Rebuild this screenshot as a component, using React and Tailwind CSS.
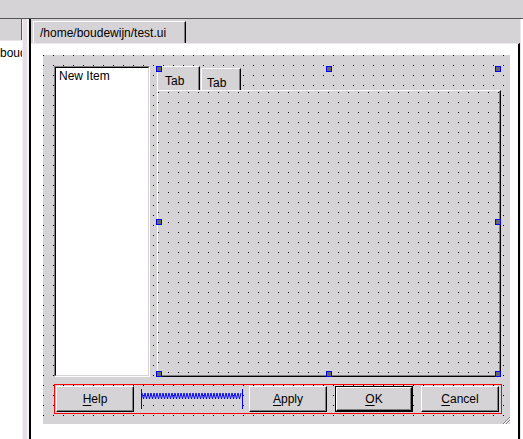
import React from 'react';

function Handle({ className }) {
  return <div className={`absolute h-[6px] w-[6px] border border-[#0000ff] bg-[#666] ${className}`} />;
}

function Button({ children, isDefault = false }) {
  const face = (
    <div className="flex h-full w-full items-center justify-center border-t border-l border-t-white border-l-white border-b border-r border-b-black border-r-black bg-[#d6d3d6] shadow-[inset_-1px_-1px_0_#808080]">
      {children}
    </div>
  );
  if (isDefault) {
    return <div className="h-[26px] w-[78px] shrink-0 border border-black">{face}</div>;
  }
  return <div className="h-[26px] w-[78px] shrink-0">{face}</div>;
}

function Spacer() {
  const pts = [];
  for (let i = 0; i <= 66; i++) pts.push(`${1 + i * 1.5},${i % 2 ? 10 : 4}`);
  return (
    <svg width="102" height="20" className="shrink-0" viewBox="0 0 102 20">
      <line x1="0.5" y1="0" x2="0.5" y2="20" stroke="#0000ff" />
      <line x1="101.5" y1="0" x2="101.5" y2="20" stroke="#0000ff" />
      <polyline points={pts.join(' ')} fill="none" stroke="#0000ff" strokeWidth="1" />
    </svg>
  );
}

export default function App() {
  return (
    <div className="h-[439px] w-[523px] overflow-hidden bg-[#d6d3d6] font-['Liberation_Sans',Arial,sans-serif] text-[12px] leading-none text-black">
      <div className="h-[18px]" />
      <div className="h-px bg-[#555]" />
      <div className="flex h-[420px]">
        {/* left dock */}
        <div className="flex w-[22px] flex-col">
          <div className="h-[21px] border-r border-[#555]" />
          <div className="flex-1 overflow-hidden whitespace-nowrap border-t border-[#ece6ec] bg-white pt-[6px]">
            boudewijn
          </div>
        </div>
        <div className="w-[7px] border-l border-[#f4f0f4] bg-[#e6e0e6] shadow-[inset_-2px_0_0_#f6f2f6]" />
        <div className="w-[2px] bg-black" />

        {/* main tab */}
        <div className="flex w-[489px] flex-col">
          <div className="h-[24px] pl-[2px] pt-[2px]">
            <div className="flex h-[22px] w-[153px] items-center border-t border-l border-t-white border-l-white border-r border-r-black pl-[6px] shadow-[inset_-1px_0_0_#808080]">
              /home/boudewijn/test.ui
            </div>
          </div>
          <div className="flex-1 border-t border-[#ece6ec] border-r-2 border-r-black bg-white pl-[12px] pt-[11px]">
            {/* form */}
            <div className="relative flex h-[369px] w-[467px] flex-col bg-[#d6d3d6] bg-[image:conic-gradient(at_1px_1px,transparent_75%,#000_0)] bg-[size:10px_10px] bg-[position:0px_0px] pl-[11px] pt-[11px]">
              <div className="flex h-[311px]">
                <div className="w-[96px] border border-t-[#808080] border-l-[#808080] border-b-white border-r-white">
                  <div className="h-full border border-t-black border-l-black border-b-[#d6d3d6] border-r-[#d6d3d6] bg-white pl-[3px] pt-[2px]">
                    New Item
                  </div>
                </div>
                <div className="relative ml-[6px] flex w-[345px] flex-col">
                  <div className="flex h-[24px] items-end pl-[1px]">
                    <div className="flex h-[24px] w-[43px] items-start border-t border-l border-t-white border-l-white border-r border-r-black bg-[#d6d3d6] pl-[7px] pt-[8px] shadow-[inset_-1px_0_0_#808080]">
                      Tab
                    </div>
                    <div className="ml-px flex h-[22px] w-[40px] items-start border-t border-l border-t-white border-l-white border-r border-r-black bg-[#d6d3d6] pl-[5px] pt-[8px] shadow-[inset_-1px_0_0_#808080]">
                      Tab
                    </div>
                  </div>
                  <div className="ml-px flex-1 border-t border-l border-t-white border-l-white border-b border-r border-b-black border-r-black bg-[#d6d3d6] bg-[image:conic-gradient(at_1px_1px,transparent_75%,#000_0)] bg-[size:10px_10px] bg-[position:0px_1px] shadow-[inset_-1px_-1px_0_#808080]" />
                  <Handle className="left-0 top-0" />
                  <Handle className="left-[170px] top-0" />
                  <Handle className="right-0 top-0" />
                  <Handle className="left-0 top-[153px]" />
                  <Handle className="right-0 top-[153px]" />
                  <Handle className="bottom-0 left-0" />
                  <Handle className="bottom-0 left-[170px]" />
                  <Handle className="bottom-0 right-0" />
                </div>
              </div>
              <div className="mt-[7px] flex h-[30px] w-[448px] items-center border border-[#ff0000] pl-px">
                <Button>
                  <span className="underline underline-offset-2">H</span>elp
                </Button>
                <div className="ml-[7px]">
                  <Spacer />
                </div>
                <div className="ml-[6px]">
                  <Button>
                    <span className="underline underline-offset-2">A</span>pply
                  </Button>
                </div>
                <div className="ml-[8px]">
                  <Button isDefault>
                    <span className="underline underline-offset-2">O</span>K
                  </Button>
                </div>
                <div className="ml-[8px]">
                  <Button>
                    <span className="underline underline-offset-2">C</span>ancel
                  </Button>
                </div>
              </div>
              <svg width="8" height="8" viewBox="0 0 8 8" className="absolute bottom-0 right-0">
                <line x1="1" y1="8" x2="8" y2="1" stroke="#808080" />
                <line x1="4" y1="8" x2="8" y2="4" stroke="#808080" />
                <line x1="2" y1="8" x2="8" y2="2" stroke="#fff" />
                <line x1="5" y1="8" x2="8" y2="5" stroke="#fff" />
              </svg>
            </div>
          </div>
        </div>
        <div className="w-[3px] border-l border-[#ece6ec] bg-white" />
      </div>
    </div>
  );
}
